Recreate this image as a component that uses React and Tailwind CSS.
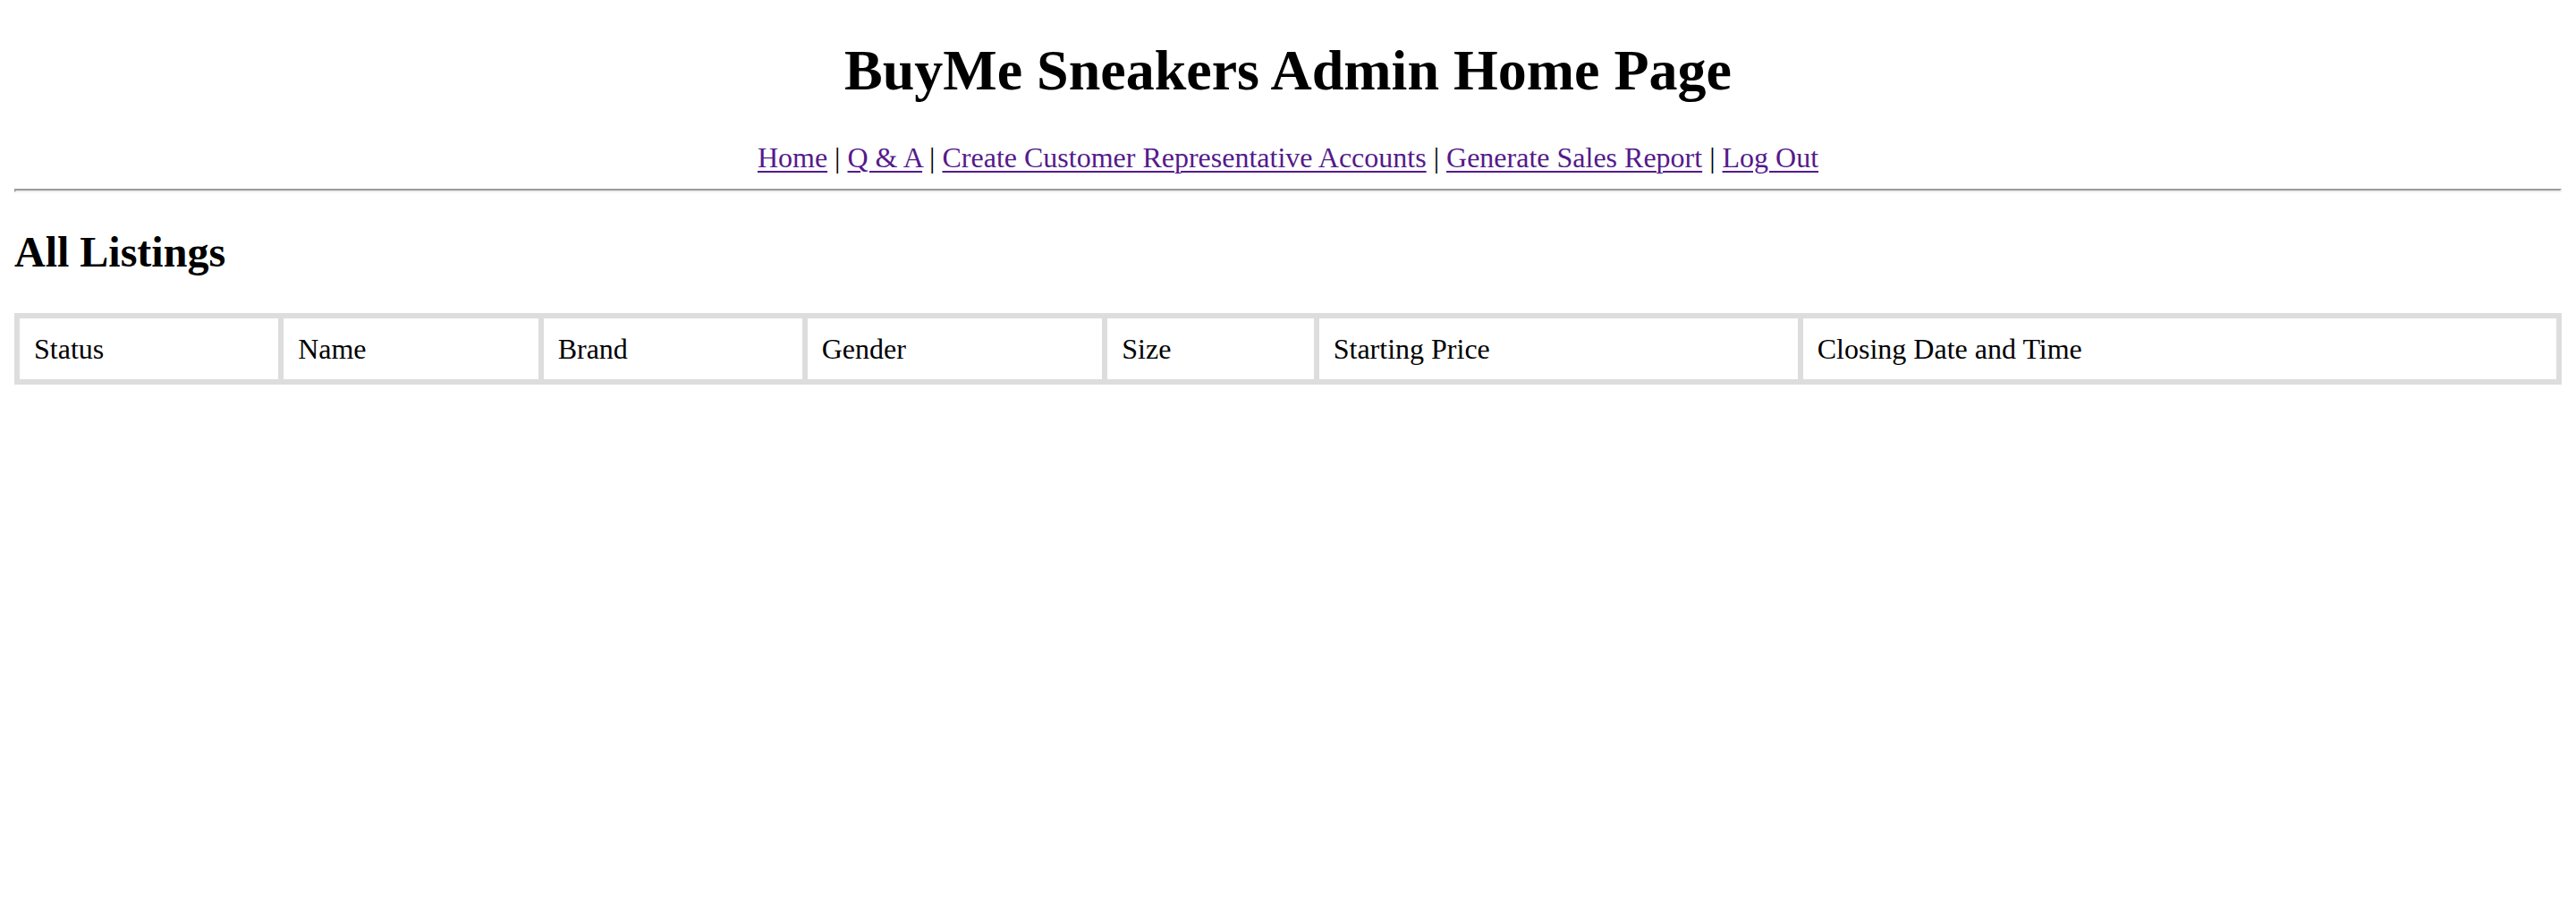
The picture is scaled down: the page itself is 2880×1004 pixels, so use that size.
import React from "react";

const links = [
  "Home",
  "Q & A",
  "Create Customer Representative Accounts",
  "Generate Sales Report",
  "Log Out",
];

const cols = [
  "Status",
  "Name",
  "Brand",
  "Gender",
  "Size",
  "Starting Price",
  "Closing Date and Time",
];

export default function App() {
  return (
    <div
      className="min-h-[1004px] bg-white px-4 pb-4 text-black"
      style={{ fontFamily: '"Liberation Serif", "Times New Roman", serif' }}
    >
      <h1 className="m-0 pt-[42px] pb-[42px] text-center text-[64px] font-bold leading-[73.6px]">
        BuyMe Sneakers Admin Home Page
      </h1>
      <div className="text-center text-[32px] leading-[36.8px]">
        {links.map((l, i) => (
          <React.Fragment key={l}>
            {i > 0 && <span> | </span>}
            <a
              href="#"
              className="text-[#551a8b] underline decoration-[2px] underline-offset-[4px]"
            >
              {l}
            </a>
          </React.Fragment>
        ))}
      </div>
      <div className="mt-[17px] h-[4px] border-t-2 border-l-2 border-t-[#9a9a9a] border-l-[#9a9a9a] border-b-2 border-r-2 border-b-[#eeeeee] border-r-[#eeeeee]" />
      <h2 className="m-0 pt-[39px] pb-[40px] text-[48px] font-bold leading-[55.2px]">
        All Listings
      </h2>
      <table className="w-full border-separate border-spacing-0 border-[3px] border-[#dddddd]">
        <tbody>
          <tr>
            {cols.map((c) => (
              <td
                key={c}
                className="border-[3px] border-[#dddddd] p-4 text-left text-[32px] leading-[36.8px]"
              >
                {c}
              </td>
            ))}
          </tr>
        </tbody>
      </table>
    </div>
  );
}
